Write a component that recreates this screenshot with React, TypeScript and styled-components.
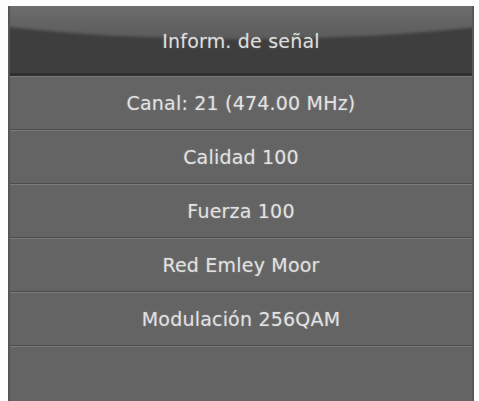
import styled, { createGlobalStyle } from 'styled-components'

const GlobalStyle = createGlobalStyle`
  html, body {
    margin: 0;
    padding: 0;
    background: #fdfdfd;
  }
`

const rows = ['Canal: 21 (474.00 MHz)', 'Calidad 100', 'Fuerza 100', 'Red Emley Moor', 'Modulación 256QAM']

const Page = styled.div`
  padding: 6px 5px 0 8px;
  height: 401px;
  box-sizing: border-box;
  overflow: hidden;
`

const Panel = styled.div`
  display: flex;
  flex-direction: column;
  height: 395px;
  background: #646464;
  border-left: 2px solid #555;
  border-right: 2px solid #585858;
  font-family: 'DejaVu Sans', 'Liberation Sans', sans-serif;
`

// dark title bar with a soft glossy arc across its top
const Header = styled.div`
  position: relative;
  display: flex;
  align-items: center;
  justify-content: center;
  height: 67px;
  background: #3e3e3e;
  border-bottom: 3px solid #2f2f2f;
  overflow: hidden;
  &::before {
    content: '';
    position: absolute;
    left: -167px;
    width: 800px;
    top: -95px;
    height: 128px;
    border-radius: 50%;
    background: linear-gradient(180deg, #6e6e6e 72%, #5b5b5b 100%);
    filter: blur(1.5px);
  }
`

const Title = styled.span`
  position: relative;
  color: #dedede;
  font-size: 19px;
  letter-spacing: 0.2px;
  margin-top: 2px;
  text-shadow: 0 0 2px rgba(255, 255, 255, 0.25);
`

const Row = styled.div<{ last?: boolean }>`
  display: flex;
  align-items: center;
  justify-content: center;
  height: 52px;
  flex: ${(p) => (p.last ? '1 0 0' : '0 0 auto')};
  border-top: 1px solid #7a7a7a;
  border-bottom: ${(p) => (p.last ? 'none' : '1px solid #4c4c4c')};
  color: #e2e2e2;
  font-size: 19px;
  letter-spacing: 0.2px;
  text-shadow: 0 0 2px rgba(255, 255, 255, 0.25);
`

export default function App() {
  return (
    <>
      <GlobalStyle />
      <Page>
        <Panel>
          <Header>
            <Title>Inform. de señal</Title>
          </Header>
          {rows.map((r) => (
            <Row key={r}>{r}</Row>
          ))}
          <Row last />
        </Panel>
      </Page>
    </>
  )
}
